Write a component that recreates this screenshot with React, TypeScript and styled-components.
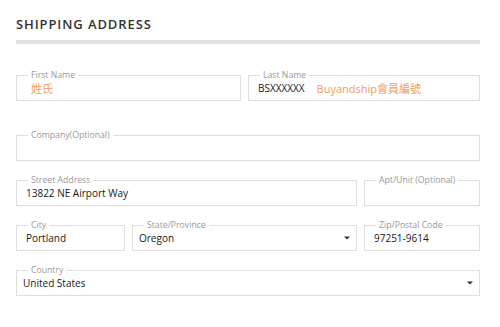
import styled, { createGlobalStyle } from 'styled-components';

const GlobalStyle = createGlobalStyle`
	html, body {
		margin: 0;
		background: #fff;
		font-family: 'Open Sans', 'Noto Sans CJK TC', sans-serif;
	}
`;

interface FieldProps {
	label: string;
	value?: string;
	hint?: string;
	placeholder?: string;
	inset?: number;
	select?: boolean;
}

function Field({ label, value, hint, placeholder, inset = 10, select }: FieldProps) {
	return (
		<Box>
			<Legend>{label}</Legend>
			<Control $inset={inset}>
				{placeholder && <Hint>{placeholder}</Hint>}
				{value && <Value>{value}</Value>}
				{hint && <Hint $spaced>{hint}</Hint>}
				{select && (
					<Caret width='6' height='4' viewBox='0 0 6 4'>
						<path d='M0 0.5h6L3 3.5z' fill='#333' />
					</Caret>
				)}
			</Control>
		</Box>
	);
}

export default function App() {
	return (
		<Page>
			<GlobalStyle />
			<Title>Shipping Address</Title>
			<Divider />

			<Form>
				<Row $cols='225px 1fr' $extra={15}>
					<Field label='First Name' placeholder='姓氏' inset={15} />
					<Field label='Last Name' value='BSXXXXXX' hint='Buyandship會員編號' />
				</Row>

				<Row $cols='1fr'>
					<Field label='Company(Optional)' />
				</Row>

				<Row $cols='1fr 116px'>
					<Field label='Street Address' value='13822 NE Airport Way' />
					<Field label='Apt/Unit (Optional)' />
				</Row>

				<Row $cols='109px 1fr 116px'>
					<Field label='City' value='Portland' />
					<Field label='State/Province' value='Oregon' inset={7} select />
					<Field label='Zip/Postal Code' value='97251-9614' />
				</Row>

				<Row $cols='1fr'>
					<Field label='Country' value='United States' inset={7} select />
				</Row>
			</Form>
		</Page>
	);
}

const Page = styled.div`
	width: 464px;
	padding: 16px 20px 20px 16px;
`;

const Title = styled.h2`
	margin: 0;
	font-size: 13px;
	line-height: 16px;
	font-weight: 600;
	letter-spacing: 0.9px;
	text-transform: uppercase;
	color: #333;
`;

const Divider = styled.div`
	margin-top: 8px;
	height: 4px;
	background: #e2e2e2;
`;

const Form = styled.div`
	display: grid;
	gap: 14px;
	margin-top: 26px;
`;

interface RowProps {
	$cols: string;
	$extra?: number;
}

const Row = styled.div<RowProps>`
	display: grid;
	grid-template-columns: ${(p) => p.$cols};
	gap: 7px;
	margin-bottom: ${(p) => p.$extra ?? 0}px;
`;

const Box = styled.fieldset`
	margin: 0;
	min-width: 0;
	padding: 0 0 4px;
	border: 1px solid #dedede;
`;

const Legend = styled.legend`
	margin-left: 11px;
	padding: 0 3px;
	font-size: 8.7px;
	line-height: 10px;
	color: #999;
`;

const Control = styled.div<{ $inset: number }>`
	display: flex;
	align-items: center;
	height: 16px;
	padding: 0 6px 0 ${(p) => p.$inset - 1}px;
	white-space: nowrap;
`;

const Value = styled.span`
	font-size: 10px;
	color: #1a1a1a;
`;

const Hint = styled.span<{ $spaced?: boolean }>`
	margin-left: ${(p) => (p.$spaced ? '12px' : '0')};
	font-size: 11px;
	color: #f29b62;
`;

const Caret = styled.svg`
	margin-left: auto;
`;
